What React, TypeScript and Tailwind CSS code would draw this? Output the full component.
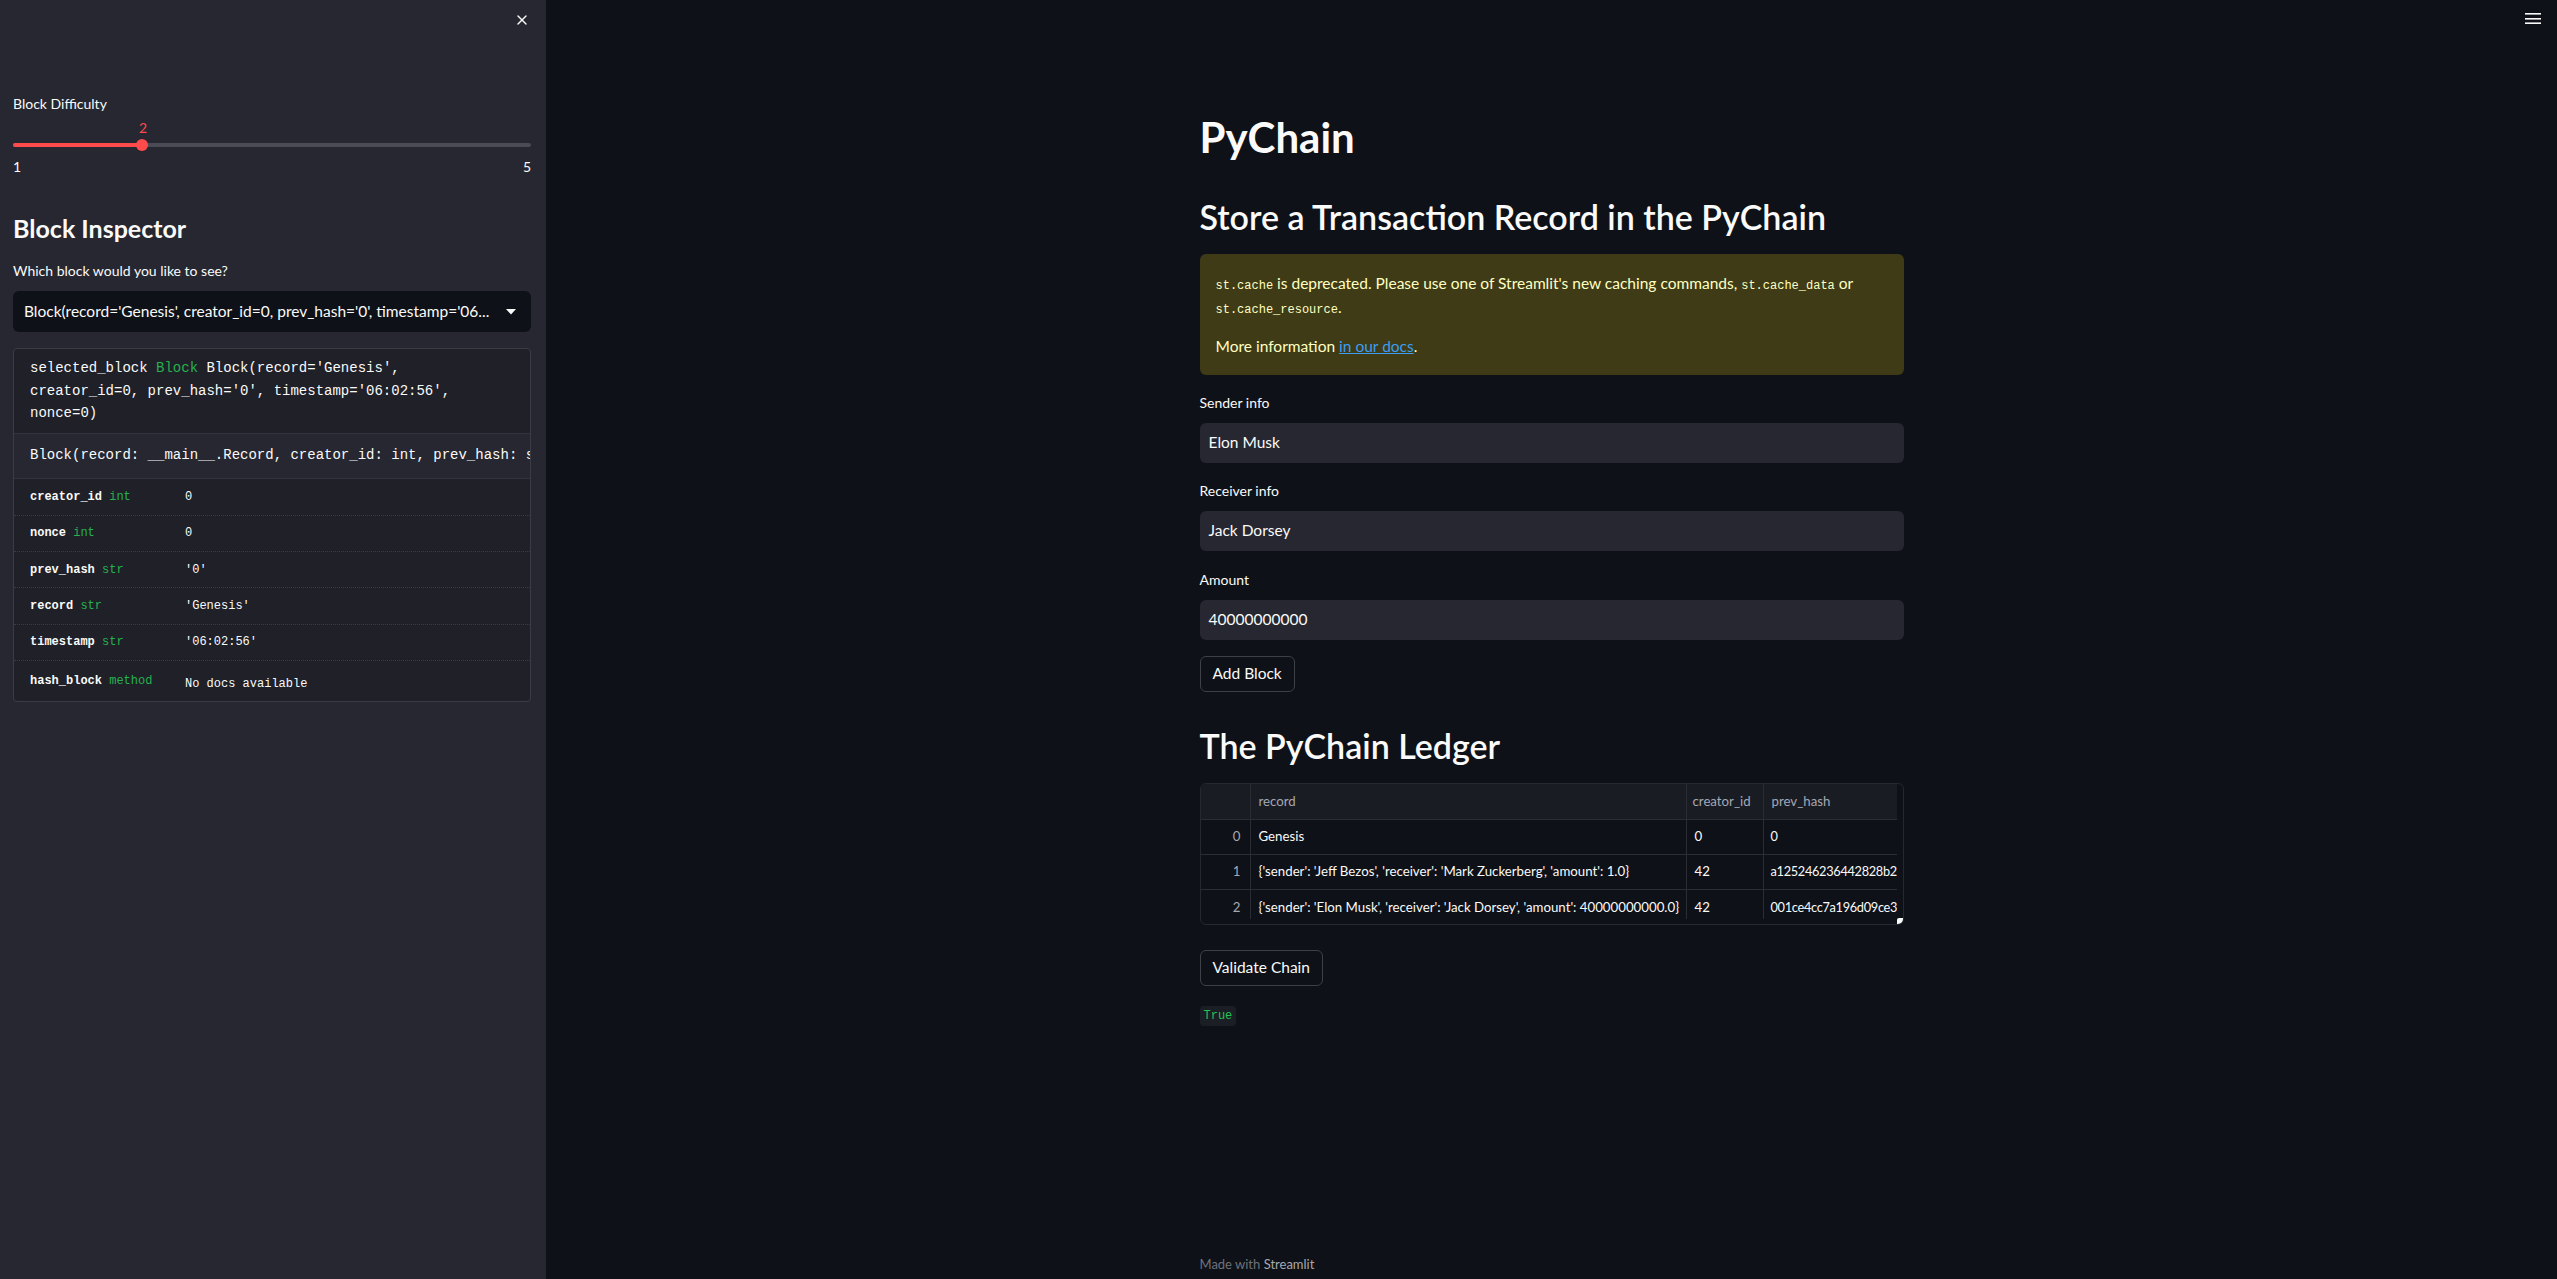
import React from "react";
import { X } from "lucide-react";

type Attr = {
  name: string;
  type: string;
  value: string;
};

const attrs: Attr[] = [
  { name: "creator_id", type: "int", value: "0" },
  { name: "nonce", type: "int", value: "0" },
  { name: "prev_hash", type: "str", value: "'0'" },
  { name: "record", type: "str", value: "'Genesis'" },
  { name: "timestamp", type: "str", value: "'06:02:56'" },
  { name: "hash_block", type: "method", value: "No docs available" },
];

const ledger = [
  { record: "Genesis", creator: "0", prev: "0" },
  { record: "{'sender': 'Jeff Bezos', 'receiver': 'Mark Zuckerberg', 'amount': 1.0}", creator: "42", prev: "a125246236442828b2" },
  { record: "{'sender': 'Elon Musk', 'receiver': 'Jack Dorsey', 'amount': 40000000000.0}", creator: "42", prev: "001ce4cc7a196d09ce3" },
];

const Field = ({ label, value, top }: { label: string; value: string; top: string }) => (
  <div className={top}>
    <p className="text-[14px] leading-[20px] text-[#fafafa]">{label}</p>
    <div className="mt-[10px] h-[40px] rounded-[6px] bg-[#262730] pl-[9px] flex items-center text-[15.5px] text-[#fafafa]">
      {value}
    </div>
  </div>
);

const Button = ({ label, top }: { label: string; top: string }) => (
  <button className={`${top} h-[36px] px-[12px] rounded-[6px] border border-[#3e4048] bg-[#0e1117] text-[15.5px] text-[#fafafa]`}>
    {label}
  </button>
);

const Sidebar = () => (
  <aside className="relative w-[546px] shrink-0 h-full bg-[#262730] pl-[13px] pr-[15px] pt-[94px]">
    <button className="absolute right-[16px] top-[12px] text-[#fafafa]">
      <X size={16} strokeWidth={2} />
    </button>

    <p className="text-[14px] leading-[20px] text-[#fafafa]">Block Difficulty</p>
    <div className="mt-[6px] pl-[126px] text-[14px] leading-[16px] text-[#ff4b4b]">2</div>
    <div className="relative mt-[7px] h-[4px] w-full rounded-full bg-[#4a4b55]">
      <div className="h-full w-[130px] rounded-full bg-[#ff4b4b]" />
      <div className="absolute left-[123px] top-[-4px] h-[12px] w-[12px] rounded-full bg-[#ff4b4b]" />
    </div>
    <div className="mt-[12px] flex justify-between text-[14px] leading-[16px] text-[#fafafa]">
      <span>1</span>
      <span>5</span>
    </div>

    <h2 className="mt-[37px] text-[25px] leading-[32px] font-bold text-[#fafafa]">Block Inspector</h2>
    <p className="mt-[17px] text-[14px] leading-[20px] text-[#fafafa]">Which block would you like to see?</p>
    <div className="mt-[10px] h-[41px] rounded-[6px] bg-[#0e1117] pl-[11px] pr-[15px] flex items-center justify-between">
      <span className="text-[15.5px] text-[#fafafa] whitespace-nowrap">
        Block(record='Genesis', creator_id=0, prev_hash='0', timestamp='06...
      </span>
      <svg width="10" height="6" viewBox="0 0 10 6">
        <path d="M0 0 L10 0 L5 5.5 Z" fill="#fafafa" />
      </svg>
    </div>

    <div className="mt-[16px] rounded-[4px] border border-[#3a3b44] bg-[#1f2028] overflow-hidden font-['Liberation_Mono',monospace] text-[#fafafa]">
      <div className="px-[16px] py-[8px] text-[14px] leading-[22.5px] border-b border-[#33343d]">
        selected_block <span className="text-[#26b14f]">Block</span> Block(record='Genesis',
        <br />
        creator_id=0, prev_hash='0', timestamp='06:02:56',
        <br />
        nonce=0)
      </div>
      <div className="h-[45px] px-[16px] flex items-center bg-[#262730] text-[14px] whitespace-nowrap overflow-hidden border-b border-[#33343d]">
        Block(record: __main__.Record, creator_id: int, prev_hash: s
      </div>
      <div>
        {attrs.map((a, i) => (
          <div
            key={a.name}
            className={`grid grid-cols-[171px_1fr] text-[12px] ${i > 0 ? "border-t border-dotted border-[#3a3b44]" : ""} ${a.type === "method" ? "h-[41px] items-start pt-[11px]" : "h-[36.3px] items-center"}`}
          >
            <div className="pl-[16px]">
              <span className="font-bold">{a.name}</span> <span className="text-[#26b14f]">{a.type}</span>
            </div>
            <div className={a.type === "method" ? "pt-[3px]" : ""}>{a.value}</div>
          </div>
        ))}
      </div>
    </div>
  </aside>
);

const Ledger = () => (
  <div className="relative mt-[15px] h-[142px] rounded-[6px] border border-[#262830] overflow-hidden">
    <div className="w-[696px] h-[135px] overflow-hidden">
      <div className="grid grid-cols-[50px_436px_77px_200px] text-[13.25px] whitespace-nowrap">
        <div className="h-[36px] bg-[#1a1c24] border-r border-b border-[#2b2d35]" />
        <div className="h-[36px] bg-[#1a1c24] border-r border-b border-[#2b2d35] pl-[8px] flex items-center text-[#a3a8b4]">record</div>
        <div className="h-[36px] bg-[#1a1c24] border-r border-b border-[#2b2d35] pl-[6px] flex items-center text-[#a3a8b4] overflow-hidden">creator_id</div>
        <div className="h-[36px] bg-[#1a1c24] border-b border-[#2b2d35] pl-[8px] flex items-center text-[#a3a8b4]">prev_hash</div>
        {ledger.map((r, i) => (
          <React.Fragment key={i}>
            <div className={`h-[35px] border-r border-[#2b2d35] ${i < 2 ? "border-b" : ""} pr-[9px] flex items-center justify-end text-[#a6a8ae]`}>{i}</div>
            <div className={`h-[35px] border-r border-[#2b2d35] ${i < 2 ? "border-b" : ""} pl-[8px] flex items-center text-[#fafafa]`}>{r.record}</div>
            <div className={`h-[35px] border-r border-[#2b2d35] ${i < 2 ? "border-b" : ""} pl-[8px] flex items-center text-[#fafafa]`}>{r.creator}</div>
            <div className={`h-[35px] border-[#2b2d35] ${i < 2 ? "border-b" : ""} pl-[7px] flex items-center text-[12.75px] text-[#fafafa] tracking-[-0.3px]`}>{r.prev}</div>
          </React.Fragment>
        ))}
      </div>
    </div>
    <div className="absolute right-0 bottom-0 h-[6px] w-[6px] bg-[#fafafa] rounded-tl-[2px]" />
  </div>
);

export default function App() {
  return (
    <div className="flex h-[1279px] w-full overflow-hidden bg-[#0e1117] font-['Lato',sans-serif]">
      <Sidebar />
      <main className="relative flex-1 flex flex-col items-center">
        <button className="absolute right-[16px] top-[13px]">
          <svg width="16" height="12" viewBox="0 0 16 12">
            <rect x="0" y="0" width="16" height="1.6" fill="#fafafa" />
            <rect x="0" y="5" width="16" height="1.6" fill="#fafafa" />
            <rect x="0" y="9.4" width="16" height="1.6" fill="#fafafa" />
          </svg>
        </button>

        <div className="w-[704px] pt-[111px] flex flex-col items-start">
          <h1 className="text-[42px] leading-[52px] font-bold text-[#fafafa]">PyChain</h1>
          <h2 className="mt-[32px] text-[34px] leading-[44px] font-semibold text-[#fafafa]">
            Store a Transaction Record in the PyChain
          </h2>

          <div className="mt-[15px] w-full rounded-[6px] bg-[#3e3b16] px-[16px] pt-[17px] pb-[17px] text-[15.5px] leading-[24px] text-[#ffffc2]">
            <p>
              <code className="font-['Liberation_Mono',monospace] text-[12px] leading-none">st.cache</code> is deprecated. Please use one of
              Streamlit's new caching commands, <code className="font-['Liberation_Mono',monospace] text-[12px] leading-none">st.cache_data</code> or{" "}
              <code className="font-['Liberation_Mono',monospace] text-[12px] leading-none">st.cache_resource</code>.
            </p>
            <p className="mt-[15px]">
              More information <a className="text-[#3d9df3] underline">in our docs</a>.
            </p>
          </div>

          <Field label="Sender info" value="Elon Musk" top="mt-[18px] w-full" />
          <Field label="Receiver info" value="Jack Dorsey" top="mt-[18px] w-full" />
          <Field label="Amount" value="40000000000" top="mt-[19px] w-full" />
          <Button label="Add Block" top="mt-[16px]" />

          <h2 className="mt-[32px] text-[34px] leading-[44px] font-semibold text-[#fafafa]">The PyChain Ledger</h2>
          <div className="w-full">
            <Ledger />
          </div>

          <Button label="Validate Chain" top="mt-[25px]" />
          <code className="mt-[20px] h-[20px] px-[4px] rounded-[4px] bg-[#1c1e25] flex items-center font-['Liberation_Mono',monospace] text-[12px] text-[#21c354]">
            True
          </code>
        </div>

        <div className="mt-auto w-[704px] pb-[6px] text-[13px] leading-[18px]">
          <span className="text-[#6f727a]">Made with </span>
          <span className="text-[#a6a9b0]">Streamlit</span>
        </div>
      </main>
    </div>
  );
}
